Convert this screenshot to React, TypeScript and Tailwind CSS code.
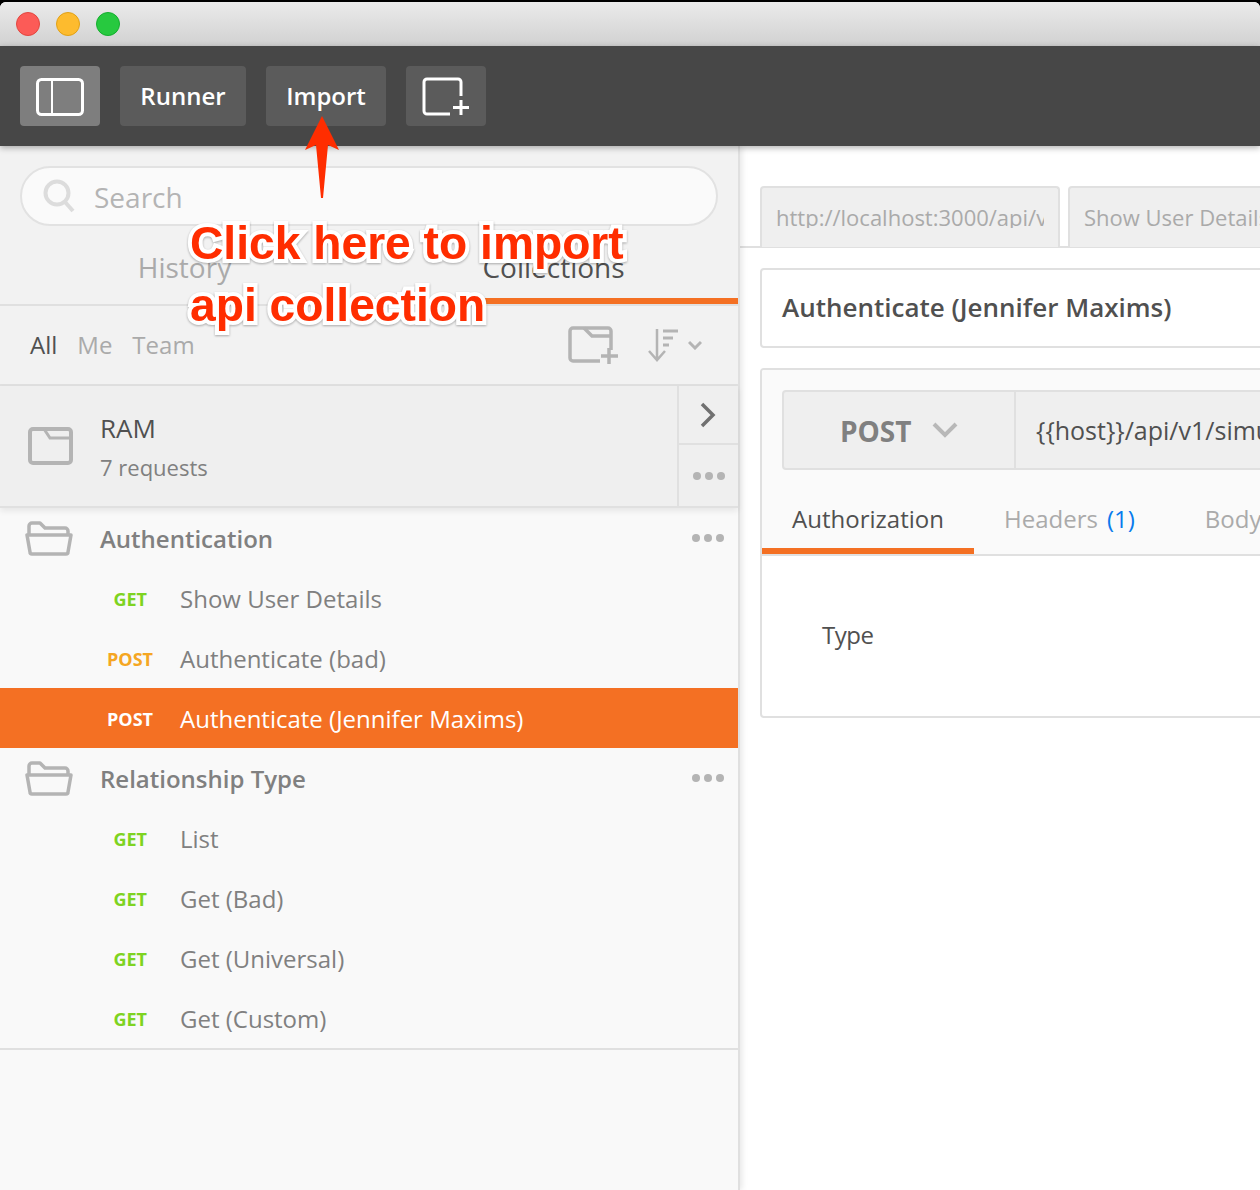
import React from 'react';

const Dots = () => (
  <div className="flex gap-[4px]">
    <span className="size-[8px] rounded-full bg-[#b4b4b4]" />
    <span className="size-[8px] rounded-full bg-[#b4b4b4]" />
    <span className="size-[8px] rounded-full bg-[#b4b4b4]" />
  </div>
);

const OpenFolder = () => (
  <svg width="48" height="36" viewBox="0 0 48 36" fill="none" stroke="#b4b4b4" strokeWidth="3.500" strokeLinejoin="round">
    <path d="M4 14V6a3 3 0 0 1 3-3h8l5 5h20a3 3 0 0 1 3 3v3" />
    <path d="M2 15h44l-3 17a2 2 0 0 1-2 2H7a2 2 0 0 1-2-2z" />
  </svg>
);

function Folder({ name }: { name: string }) {
  return (
    <div className="flex h-[60px] items-center">
      <div className="ml-[25px] w-[75px]">
        <OpenFolder />
      </div>
      <span className="flex-1 pt-[2px] text-[24px] font-semibold text-[#808080]">{name}</span>
      <div className="mr-[14px]">
        <Dots />
      </div>
    </div>
  );
}

function Req({ method, name, active }: { method: string; name: string; active?: boolean }) {
  const color = active ? 'text-white' : method === 'GET' ? 'text-[#7ed321]' : 'text-[#f5a623]';
  const pad = method === 'GET' ? 'pr-[33px]' : 'pr-[27px]';
  return (
    <div className={active ? 'flex h-[60px] items-center bg-[#f47023]' : 'flex h-[60px] items-center'}>
      <span className={`w-[180px] pt-[2px] text-right text-[18px] font-bold ${pad} ${color}`}>{method}</span>
      <span className={active ? 'pt-[2px] text-[24px] font-medium text-white' : 'pt-[2px] text-[24px] text-[#808080]'}>{name}</span>
    </div>
  );
}

export default function App() {
  return (
    <div className="relative h-[1190px] w-[1260px] overflow-hidden bg-black font-['Open_Sans',sans-serif] leading-none">
      <div className="mt-[2px] h-[1188px] overflow-hidden rounded-t-[6px] bg-white">
        {/* title bar */}
        <div className="flex h-[44px] items-center gap-[16px] bg-gradient-to-b from-[#ebebeb] to-[#d1d1d1] pl-[16px] pb-[1px]">
          <span className="size-[24px] rounded-full border border-[#e2463f] bg-[#fc5b57]" />
          <span className="size-[24px] rounded-full border border-[#e1a116] bg-[#fdbb2e]" />
          <span className="size-[24px] rounded-full border border-[#14ae2e] bg-[#27c93f]" />
        </div>

        {/* toolbar */}
        <div className="relative z-10 flex h-[100px] items-center gap-[20px] bg-[#474747] pl-[20px] shadow-[0_2px_6px_rgba(0,0,0,0.3)]">
          <button className="flex h-[60px] w-[80px] items-center justify-center rounded-[4px] bg-[#7e7e7e] pt-[1px]">
            <svg width="48" height="38" viewBox="0 0 48 38" fill="none" stroke="white">
              <rect x="1.5" y="1.5" width="45" height="35" rx="4" strokeWidth="3" />
              <path d="M16 2v34" strokeWidth="2" />
            </svg>
          </button>
          <button className="flex h-[60px] w-[126px] items-center justify-center rounded-[4px] bg-[#5b5b5b] text-[24px] font-semibold text-white">
            Runner
          </button>
          <button className="flex h-[60px] w-[120px] items-center justify-center rounded-[4px] bg-[#5b5b5b] text-[24px] font-semibold text-white">
            Import
          </button>
          <button className="flex h-[60px] w-[80px] items-center justify-center rounded-[4px] bg-[#5b5b5b] pt-[2px]">
            <svg width="48" height="40" viewBox="0 0 48 40" fill="none" stroke="white" strokeWidth="3">
              <path d="M28 37H5a3 3 0 0 1-3-3V5a3 3 0 0 1 3-3h31a3 3 0 0 1 3 3v14" />
              <path d="M39 23v15M31 30.500h16" />
            </svg>
          </button>
        </div>

        <div className="flex h-[1044px]">
          {/* sidebar */}
          <aside className="relative z-[5] flex w-[740px] shrink-0 flex-col border-r-2 border-[#e0e0e0] bg-[#f9f9f9] shadow-[2px_0_6px_rgba(0,0,0,0.1)]">
            <div className="bg-[#f2f2f2] px-[20px] pt-[20px]">
              <div className="flex h-[60px] w-[698px] items-center rounded-[30px] border-2 border-[#e2e2e2] bg-[#fafafa] pl-[20px]">
                <svg width="34" height="34" viewBox="0 0 34 34" fill="none" stroke="#dcdcdc" strokeWidth="4">
                  <circle cx="15" cy="14" r="11.500" />
                  <path d="M23 23l8 9" />
                </svg>
                <span className="ml-[18px] pt-[2px] text-[28px] text-[#b4b4b4]">Search</span>
              </div>
            </div>
            <div className="flex h-[80px] border-b-2 border-[#e0e0e0] bg-[#f2f2f2]">
              <div className="flex w-[369px] items-center justify-center pt-[4px] text-[28px] text-[#aaaaaa]">History</div>
              <div className="flex h-[78px] w-[369px] items-center justify-center border-b-[6px] border-[#f47023] pt-[10px] text-[28px] text-[#505050]">
                Collections
              </div>
            </div>
            <div className="flex h-[80px] items-center border-b-2 border-[#e0e0e0] bg-[#f2f2f2] pl-[30px] text-[24px] text-[#aaaaaa]">
              <span className="text-[#505050]">All</span>
              <span className="ml-[20px]">Me</span>
              <span className="ml-[20px]">Team</span>
              <svg className="ml-auto" width="52" height="38" viewBox="0 0 52 38" fill="none" stroke="#b4b4b4" strokeWidth="3.500">
                <path d="M32 35H5a3 3 0 0 1-3-3V5a3 3 0 0 1 3-3h35a3 3 0 0 1 3 3v19" />
                <path d="M16 2l8 8h19" />
                <path d="M41 22v16M33 30h17" />
              </svg>
              <svg className="ml-[28px]" width="30" height="34" viewBox="0 0 30 34" fill="none" stroke="#b4b4b4" strokeWidth="2.500">
                <path d="M9 1v30M1 23l8 9 8-9" fill="none" />
                <path d="M15 3h17M15 10h10M15 17h6" strokeWidth="3" />
              </svg>
              <svg className="ml-[10px] mr-[36px]" width="14" height="10" viewBox="0 0 14 10" fill="none" stroke="#b4b4b4" strokeWidth="3">
                <path d="M1 2l6 6 6-6" />
              </svg>
            </div>

            <div className="flex h-[122px] border-b-2 border-[#e0e0e0] bg-[#efefef] shadow-[0_3px_6px_rgba(0,0,0,0.08)]">
              <div className="flex w-[100px] items-center pl-[28px]">
                <svg width="46" height="38" viewBox="0 0 46 38" fill="none" stroke="#b4b4b4" strokeWidth="4">
                  <rect x="2" y="2" width="41" height="34" rx="3" />
                  <path d="M16 2l6 9h21" strokeWidth="3" />
                </svg>
              </div>
              <div className="flex flex-1 flex-col pt-[29px]">
                <span className="text-[26px] text-[#505050]">RAM</span>
                <span className="mt-[15px] text-[22px] text-[#808080]">7 requests</span>
              </div>
              <div className="flex w-[61px] flex-col border-l-2 border-[#e0e0e0]">
                <div className="flex h-[59px] items-center justify-center border-b-2 border-[#e0e0e0] pr-[2px]">
                  <svg width="16" height="26" viewBox="0 0 16 26" fill="none" stroke="#707070" strokeWidth="3.500">
                    <path d="M2 2l11 11L2 24" />
                  </svg>
                </div>
                <div className="flex flex-1 items-center justify-center">
                  <Dots />
                </div>
              </div>
            </div>

            <div className="border-b-2 border-[#e0e0e0] pb-0">
              <Folder name="Authentication" />
              <Req method="GET" name="Show User Details" />
              <Req method="POST" name="Authenticate (bad)" />
              <Req method="POST" name="Authenticate (Jennifer Maxims)" active />
              <Folder name="Relationship Type" />
              <Req method="GET" name="List" />
              <Req method="GET" name="Get (Bad)" />
              <Req method="GET" name="Get (Universal)" />
              <Req method="GET" name="Get (Custom)" />
            </div>
          </aside>

          {/* main pane */}
          <main className="flex-1 overflow-hidden bg-white">
            <div className="flex h-[102px] items-end gap-[8px] border-b-2 border-[#e0e0e0] pl-[20px]">
              <div className="-mb-[1px] flex h-[61px] w-[300px] shrink-0 items-center overflow-hidden rounded-t-[4px] border-2 border-b-0 border-[#e0e0e0] bg-[#efefef] px-[14px] pb-[2px] text-[22px] whitespace-nowrap text-[#aaaaaa]">
                <span className="block w-full overflow-hidden">http://localhost:3000/api/v1</span>
              </div>
              <div className="-mb-[1px] flex h-[61px] w-[300px] shrink-0 items-center rounded-t-[4px] border-2 border-b-0 border-[#e0e0e0] bg-[#efefef] px-[14px] pb-[2px] text-[22px] whitespace-nowrap text-[#aaaaaa]">
                Show User Details
              </div>
            </div>

            <div className="ml-[20px] mt-[20px] flex h-[80px] w-[600px] items-center rounded-[4px] border-2 border-[#e0e0e0] pb-[2px] pl-[20px] text-[26px] font-semibold text-[#505050]">
              Authenticate (Jennifer Maxims)
            </div>

            <div className="ml-[20px] mt-[20px] h-[350px] w-[600px] overflow-hidden rounded-[4px] border-2 border-[#e0e0e0]">
              <div className="h-[186px] border-b-2 border-[#e0e0e0] bg-[#fafafa]">
                <div className="pl-[20px] pt-[20px]">
                  <div className="flex h-[80px] w-[600px] rounded-[4px] border-2 border-[#e0e0e0] bg-[#efefef]">
                    <div className="flex w-[232px] shrink-0 items-center border-r-2 border-[#e0e0e0] pl-[56px]">
                      <span className="pt-[2px] text-[28px] font-bold text-[#808080]">POST</span>
                      <svg className="ml-[20px]" width="26" height="16" viewBox="0 0 26 16" fill="none" stroke="#b8b8b8" strokeWidth="4">
                        <path d="M2 2l11 11L24 2" />
                      </svg>
                    </div>
                    <div className="flex flex-1 items-center pl-[20px] text-[25px] whitespace-nowrap text-[#505050]">
                      {'{{host}}/api/v1/simulate'}
                    </div>
                  </div>
                </div>
                <div className="flex h-[84px] text-[24px]">
                  <div className="flex h-[84px] w-[212px] items-center justify-center border-b-[6px] border-[#f47023] pt-[20px] text-[#505050]">
                    Authorization
                  </div>
                  <div className="flex items-center pl-[30px] pt-[14px] whitespace-nowrap text-[#aaaaaa]">
                    Headers <span className="ml-[9px] font-medium text-[#097bed]">(1)</span>
                  </div>
                  <div className="flex items-center pl-[70px] pt-[14px] text-[#aaaaaa]">Body</div>
                </div>
              </div>
              <div className="pl-[60px] pt-[67px] text-[24px] tracking-[-0.5px] text-[#505050]">Type</div>
            </div>
          </main>
        </div>
      </div>

      {/* annotation */}
      <svg className="absolute left-[303px] top-[114px] z-20" width="38" height="86" viewBox="0 0 38 86">
        <path d="M19 2L36 36L25 31L20 84H18L13 31L2 36Z" fill="#ff2d00" />
      </svg>
      <div className="absolute left-[190px] top-[212px] z-20 font-['Liberation_Sans',sans-serif] text-[46.2px] leading-[62px] font-bold text-[#ff2d00] drop-shadow-[0_1px_1px_rgba(0,0,0,0.3)] [paint-order:stroke_fill] [-webkit-text-stroke:8px_white]">
        <div>Click here to import</div>
        <div>api collection</div>
      </div>
    </div>
  );
}
